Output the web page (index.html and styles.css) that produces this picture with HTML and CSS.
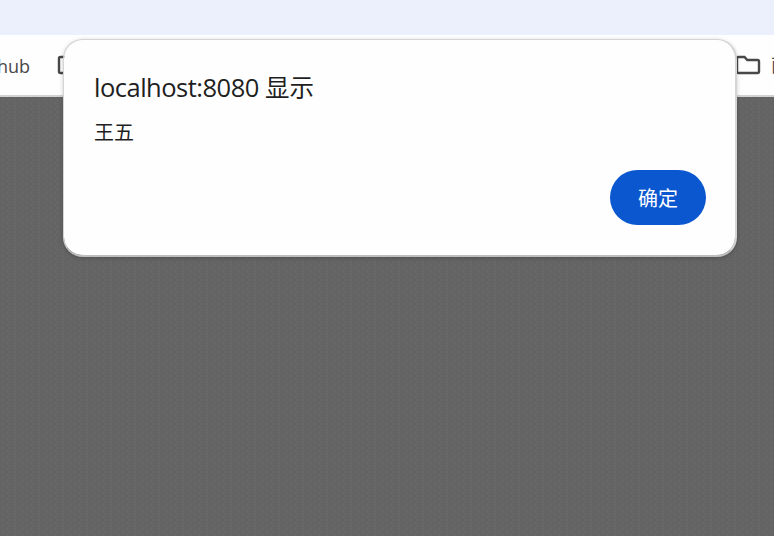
FILE: index.html
```
<!DOCTYPE html>
<html lang="zh-CN">
<head>
<meta charset="utf-8">
<title>localhost:8080</title>
<link rel="stylesheet" href="styles.css">
</head>
<body>
<div class="browser">
  <div class="toolbar"></div>
  <div class="bookmarks">
    <span class="bookmark-label">hub</span>
    <svg class="folder folder-first" viewBox="0 0 26 20"><path d="M3.5 2H9.5L12.3 5H22.5Q24 5 24 6.5V16.5Q24 18 22.5 18H3.5Q2 18 2 16.5V3.5Q2 2 3.5 2Z"/></svg>
    <svg class="folder folder-last" viewBox="0 0 26 20"><path d="M3.5 2H9.5L12.3 5H22.5Q24 5 24 6.5V16.5Q24 18 22.5 18H3.5Q2 18 2 16.5V3.5Q2 2 3.5 2Z"/></svg>
    <span class="bookmark-label bookmark-last">面</span>
  </div>
  <div class="page"></div>
</div>
<div class="dialog" role="alertdialog">
  <h1 class="title">localhost:8080 <span class="title-cjk">显示</span></h1>
  <p class="message">王五</p>
  <div class="actions"><button class="ok">确定</button></div>
</div>
</body>
</html>
```
FILE: styles.css
```
* { box-sizing: border-box; }
body {
  margin: 0;
  overflow: hidden;
  font-family: "Open Sans", "Noto Sans CJK SC", sans-serif;
}
.browser {
  display: flex;
  flex-direction: column;
  width: 774px;
  height: 536px;
  overflow: hidden;
}
.toolbar { height: 35px; background: #ebf0fc; }
.bookmarks {
  display: flex;
  align-items: center;
  height: 62px;
  background: #fefefe;
  border-bottom: 2px solid #d2d2d2;
  color: #484848;
  font-size: 18px;
}
.bookmark-label { flex: none; width: 33px; margin-left: -3px; line-height: 24px; padding-top: 1px; }
.folder {
  flex: none;
  width: 26px;
  height: 20px;
  fill: none;
  stroke: #484848;
  stroke-width: 2.4;
}
.folder-first { margin-left: 27px; }
.folder-last { margin-left: 652px; }
.bookmark-last { margin-left: 10px; padding-top: 0; }
.page {
  flex: 1;
  background-color: #646464;
  background-image:
    radial-gradient(circle, #696b68 0.5px, transparent 1px),
    radial-gradient(circle, #68696a 0.5px, transparent 1px);
  background-size: 6px 6px, 8px 6px;
  background-position: 0 0, 3px 3px;
}
.dialog {
  position: absolute;
  left: 63px;
  top: 39px;
  display: flex;
  flex-direction: column;
  width: 674px;
  height: 218px;
  padding: 30px 29px 30px 30px;
  border: 1px solid #d5d5d5;
  border-right-width: 2px;
  border-bottom: 2px solid #bebebe;
  border-radius: 20px;
  background: #fefefe;
  box-shadow: 0 1px 4px rgba(0, 0, 0, 0.2);
  background-clip: padding-box;
  color: #1f1f1f;
}
.title {
  margin: 0;
  height: 34px;
  line-height: 34px;
  font-size: 25.5px;
  letter-spacing: -0.5px;
  font-weight: 400;
  white-space: nowrap;
}
.title-cjk { font-family: "Noto Sans CJK SC", sans-serif; font-size: 24.5px; letter-spacing: 0; }
.message {
  margin: 15px 0 0;
  height: 28px;
  line-height: 28px;
  font-size: 20px;
}
.actions { display: flex; justify-content: flex-end; margin-top: 23px; }
.ok {
  width: 96px;
  height: 55px;
  margin-right: -0px;
  padding: 0;
  border: 0;
  border-radius: 28px;
  background: #0b57d0;
  color: #fff;
  font: 400 20px "Noto Sans CJK SC", sans-serif;
}
```
